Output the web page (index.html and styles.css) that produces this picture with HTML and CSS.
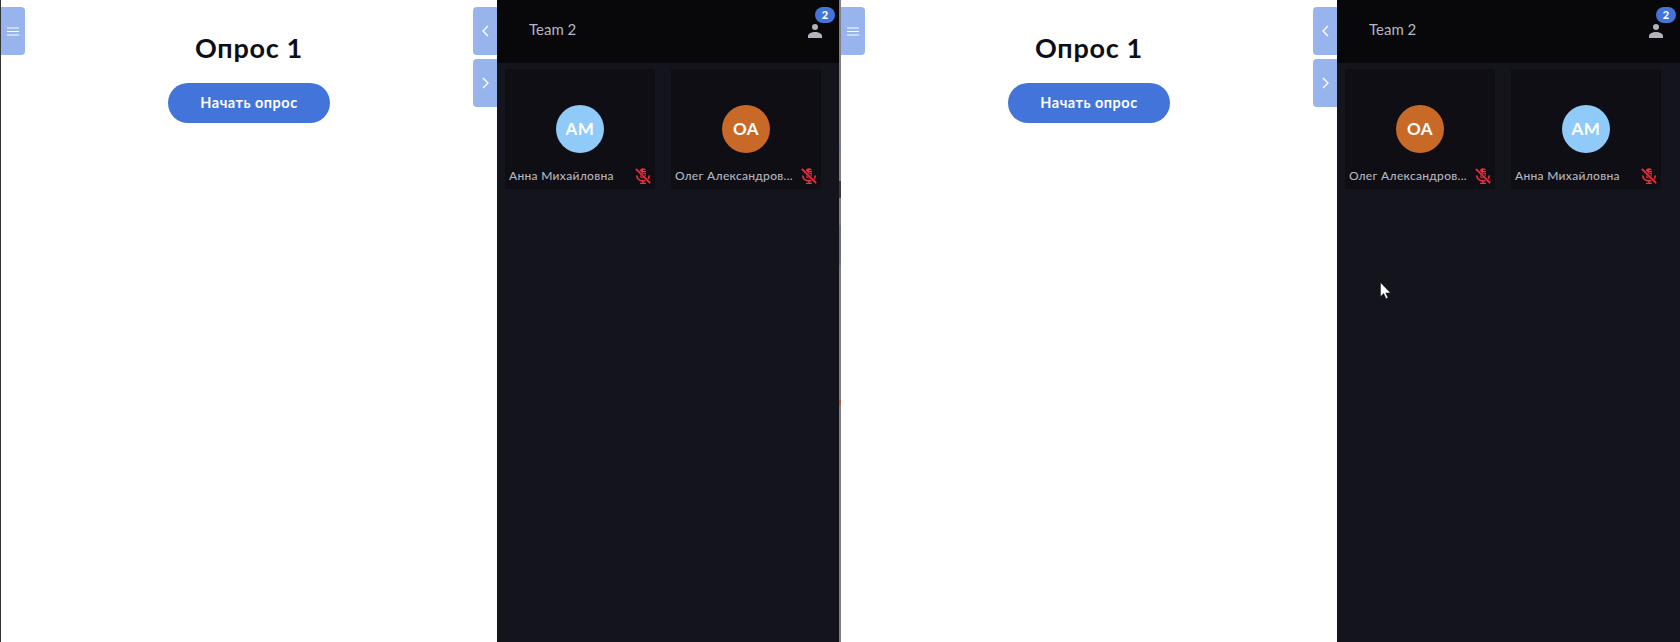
FILE: index.html
```html
<!DOCTYPE html>
<html lang="en">
<head>
    <meta charset="UTF-8">
    <meta name="viewport" content="width=device-width, initial-scale=1.0">
    <title>Опрос 1</title>
    <link rel="stylesheet" href="styles.css">
</head>
<body>
    <svg class="icon-defs" aria-hidden="true">
        <symbol id="icon-menu" viewBox="0 0 12 9">
            <path d="M0 1h12M0 4.500h12M0 8h12" fill="none" stroke="currentColor" stroke-width="1.200"/>
        </symbol>
        <symbol id="icon-prev" viewBox="0 0 7 12">
            <path d="M6 1 1 6l5 5" fill="none" stroke="currentColor" stroke-width="1.400"/>
        </symbol>
        <symbol id="icon-next" viewBox="0 0 7 12">
            <path d="M1 1l5 5-5 5" fill="none" stroke="currentColor" stroke-width="1.400"/>
        </symbol>
        <symbol id="icon-user" viewBox="0 0 14 14">
            <circle cx="7" cy="3" r="3" fill="currentColor"/>
            <path d="M0 14v-2c0-2.400 3.500-4 7-4s7 1.600 7 4v2z" fill="currentColor"/>
        </symbol>
        <symbol id="icon-mic-off" viewBox="0 0 16 16">
            <path d="M5 3c0-1.700 1.200-2.700 3-2.700S11 1.300 11 3v4.500c0 1.700-1.200 3-3 3s-3-1.300-3-3z" fill="currentColor"/>
            <path d="M8 2.500h4M8 4.700h4M8 6.900h4" stroke="#0e0e14" stroke-width=".8"/>
            <path d="M1.800 7.500c0 3.300 2.700 5.300 6.200 5.300s6.200-2 6.200-5.300M8 12.500v3.200M5 15.500h6" fill="none" stroke="currentColor" stroke-width="1.700"/>
            <path d="M.8.800l14.400 14.400" stroke="#0e0e14" stroke-width="3"/>
            <path d="M.8.800l14.400 14.400" stroke="currentColor" stroke-width="1.700"/>
        </symbol>
    </svg>

    <section class="pane pane-first">
        <main class="stage">
            <button class="side-btn menu-btn"><svg class="ico-menu"><use href="#icon-menu"/></svg></button>
            <button class="side-btn prev-btn"><svg class="ico-arrow"><use href="#icon-prev"/></svg></button>
            <button class="side-btn next-btn"><svg class="ico-arrow"><use href="#icon-next"/></svg></button>
            <h1>Опрос 1</h1>
            <button class="btn">Начать опрос</button>
        </main>
        <aside class="panel">
            <header class="panel-head">
                <span class="team-name">Team 2</span>
                <div class="users">
                    <svg class="ico-user"><use href="#icon-user"/></svg>
                    <span class="badge">2</span>
                </div>
            </header>
            <div class="tiles">
                <div class="tile">
                    <div class="avatar avatar-blue">АМ</div>
                    <div class="tile-foot">
                        <span class="tile-name">Анна Михайловна</span>
                        <svg class="ico-mic"><use href="#icon-mic-off"/></svg>
                    </div>
                </div>
                <div class="tile">
                    <div class="avatar avatar-orange">ОА</div>
                    <div class="tile-foot">
                        <span class="tile-name">Олег Александров...</span>
                        <svg class="ico-mic"><use href="#icon-mic-off"/></svg>
                    </div>
                </div>
            </div>
        </aside>
    </section>

    <section class="pane pane-second">
        <main class="stage">
            <button class="side-btn menu-btn"><svg class="ico-menu"><use href="#icon-menu"/></svg></button>
            <button class="side-btn prev-btn"><svg class="ico-arrow"><use href="#icon-prev"/></svg></button>
            <button class="side-btn next-btn"><svg class="ico-arrow"><use href="#icon-next"/></svg></button>
            <h1>Опрос 1</h1>
            <button class="btn">Начать опрос</button>
        </main>
        <aside class="panel">
            <header class="panel-head">
                <span class="team-name">Team 2</span>
                <div class="users">
                    <svg class="ico-user"><use href="#icon-user"/></svg>
                    <span class="badge">2</span>
                </div>
            </header>
            <div class="tiles">
                <div class="tile">
                    <div class="avatar avatar-orange">ОА</div>
                    <div class="tile-foot">
                        <span class="tile-name">Олег Александров...</span>
                        <svg class="ico-mic"><use href="#icon-mic-off"/></svg>
                    </div>
                </div>
                <div class="tile">
                    <div class="avatar avatar-blue">АМ</div>
                    <div class="tile-foot">
                        <span class="tile-name">Анна Михайловна</span>
                        <svg class="ico-mic"><use href="#icon-mic-off"/></svg>
                    </div>
                </div>
            </div>
        </aside>
        <svg class="cursor" viewBox="0 0 11 17">
            <path d="M.5.500v14l3.200-3 2.300 5.200 2-.9-2.200-4.900h4.700z" fill="#fff" stroke="#14141d" stroke-width=".5"/>
        </svg>
    </section>
</body>
</html>
```

FILE: styles.css
```css
* {
    box-sizing: border-box;
}

body {
    margin: 0;
    height: 642px;
    display: flex;
    overflow: hidden;
    font-family: Lato, "Noto Sans", sans-serif;
    background-color: #fff;
}

.icon-defs {
    display: none;
}

.pane {
    position: relative;
    width: 840px;
    height: 100%;
    display: flex;
}

.pane-first {
    border-left: 1px solid #333338;
    padding-right: 1px;
}

.pane-second {
    padding-left: 1px;
}

/* divider between the two windows, with bits of what shows behind it */
.pane-second::before {
    content: "";
    position: absolute;
    left: -1px;
    top: 0;
    width: 2px;
    height: 100%;
    background: linear-gradient(to bottom,
        #808084 0 146px, #4274d9 146px 147px, #808084 147px 181px,
        #3a3a40 181px 198px, #808084 198px 225px, #6c6f7c 225px 265px,
        #808084 265px 400px, #a5603a 400px 405px, #808084 405px);
}

.stage {
    position: relative;
    width: 496px;
    flex-shrink: 0;
    display: flex;
    flex-direction: column;
    align-items: center;
    padding-top: 31px;
    background-color: #fff;
}

.stage h1 {
    margin: 0 0 19px;
    font-size: 27px;
    letter-spacing: 0.7px;
    line-height: 33px;
    font-weight: 700;
    color: #0b0f1a;
}

.btn {
    width: 162px;
    height: 40px;
    padding: 0 0 2px;
    border: none;
    border-radius: 20px;
    background-color: #4274d9;
    color: #fff;
    font-family: inherit;
    font-size: 14.5px;
    letter-spacing: 0.5px;
    font-weight: 700;
}

.side-btn {
    position: absolute;
    width: 24px;
    height: 48px;
    padding: 0;
    border: none;
    display: flex;
    align-items: center;
    justify-content: center;
    background-color: #98b4ec;
    color: #fff;
}

.menu-btn {
    left: 0;
    top: 7px;
    border-radius: 0 4px 4px 0;
}

.prev-btn {
    right: 0;
    top: 7px;
    border-radius: 4px 0 0 4px;
}

.next-btn {
    right: 0;
    top: 59px;
    border-radius: 4px 0 0 4px;
}

.ico-menu {
    width: 12px;
    height: 9px;
}

.ico-arrow {
    width: 7px;
    height: 12px;
}

.panel {
    flex: 1;
    background-color: #14141d;
}

.panel-head {
    height: 63px;
    padding: 0 17px 5px 32px;
    display: flex;
    align-items: center;
    justify-content: space-between;
    background-color: #08080b;
}

.team-name {
    font-size: 15px;
    color: #b5b5c5;
}

.users {
    position: relative;
    width: 14px;
    height: 14px;
    margin-top: 4px;
    color: #b3b3bd;
}

.ico-user {
    display: block;
    width: 14px;
    height: 14px;
}

.badge {
    position: absolute;
    left: 7px;
    top: -17px;
    width: 20px;
    height: 16px;
    border-radius: 8px;
    background-color: #4274d9;
    color: #fff;
    font-size: 11px;
    font-weight: 900;
    line-height: 16px;
    text-align: center;
}

.tiles {
    display: grid;
    grid-template-columns: repeat(2, 150px);
    gap: 16px;
    padding: 6px 8px;
}

.tile {
    height: 120px;
    padding-top: 36px;
    background-color: #0e0e14;
}

.avatar {
    width: 48px;
    height: 48px;
    margin: 0 auto;
    border-radius: 50%;
    color: #fff;
    font-size: 17px;
    font-weight: 700;
    letter-spacing: 0.5px;
    line-height: 48px;
    text-align: center;
}

.avatar-blue {
    background-color: #90caf9;
}

.avatar-orange {
    background-color: #c96927;
}

.tile-foot {
    height: 36px;
    padding: 9px 4px 0;
    display: flex;
    align-items: center;
    justify-content: space-between;
    gap: 2px;
}

.tile-name {
    color: #b5b5c0;
    font-size: 12px;
    letter-spacing: 0.3px;
    font-weight: 500;
    white-space: nowrap;
}

.ico-mic {
    width: 16px;
    height: 16px;
    flex-shrink: 0;
    color: #e5343f;
}

.cursor {
    position: absolute;
    left: 540px;
    top: 282px;
    width: 11px;
    height: 17px;
}
```
